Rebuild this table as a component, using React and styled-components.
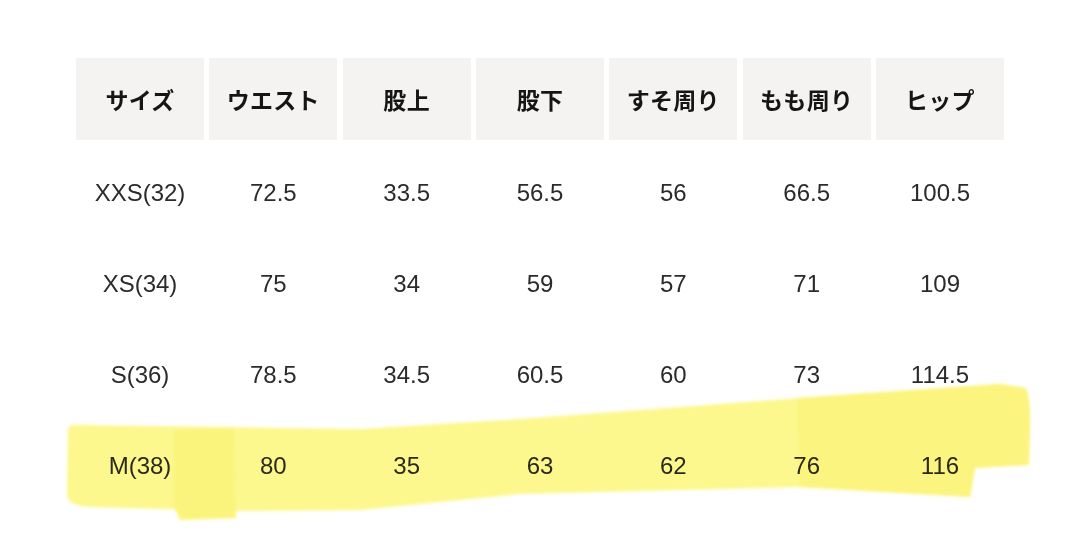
import React from 'react';
import styled, { createGlobalStyle } from 'styled-components';

const Global = createGlobalStyle`
  html, body {
    margin: 0;
    padding: 0;
    background: #ffffff;
  }
  body {
    width: 1080px;
    height: 535px;
    overflow: hidden;
  }
`

const Page = styled.div`
  position: relative;
  width: 1080px;
  height: 535px;
  box-sizing: border-box;
  padding: 58px 76px 0 76px;
`

const Table = styled.div`
  display: grid;
  grid-template-columns: repeat(7, 128px);
  column-gap: 5.33px;
  grid-template-rows: 85px repeat(4, 91px);
`

const HeadCell = styled.div`
  display: flex;
  align-items: center;
  justify-content: center;
  background: #f4f3f2;
  margin-bottom: 3px;
  font-family: "Noto Sans CJK JP", "Noto Sans", sans-serif;
  font-weight: 700;
  font-size: 23px;
  color: #151515;
  letter-spacing: 0.3px;
`

const Cell = styled.div`
  display: flex;
  align-items: center;
  justify-content: center;
  box-sizing: border-box;
  padding-top: 8px;
  font-family: "Liberation Sans", Arial, sans-serif;
  font-size: 24px;
  color: #2b2b2b;
`

const Highlight = styled.svg`
  position: absolute;
  left: 0;
  top: 0;
  width: 1080px;
  height: 535px;
  pointer-events: none;
  mix-blend-mode: multiply;
`

const headers = ['サイズ', 'ウエスト', '股上', '股下', 'すそ周り', 'もも周り', 'ヒップ']

const rows = [
  ['XXS(32)', '72.5', '33.5', '56.5', '56', '66.5', '100.5'],
  ['XS(34)', '75', '34', '59', '57', '71', '109'],
  ['S(36)', '78.5', '34.5', '60.5', '60', '73', '114.5'],
  ['M(38)', '80', '35', '63', '62', '76', '116'],
]

export default function App() {
  return (
    <Page>
      <Global />
      <Table>
        {headers.map(h => (
          <HeadCell key={h}>{h}</HeadCell>
        ))}
        {rows.map((row, i) =>
          row.map((v, j) => (
            <Cell key={`${i}-${j}`}>{v}</Cell>
          ))
        )}
      </Table>
      {/* highlighter marks over the M(38) row */}
      <Highlight viewBox="0 0 1080 535">
        <defs>
          <filter id="soft" x="-5%" y="-20%" width="110%" height="140%">
            <feGaussianBlur stdDeviation="1.8" />
          </filter>
        </defs>
        <g filter="url(#soft)">
          <path
            d="M68 428 Q70 424 80 425 L360 429 L520 419 L800 398 L1000 384 L1026 388 Q1031 400 1030 430 L1029 465 L975 468 L970 497 L800 487 L520 494 L360 510 L240 511 L90 507 Q68 506 67 495 Z"
            fill="#fcf88e"
          />
          <path d="M174 430 L234 428 L236 518 L180 520 L173 505 Z" fill="#fbf47c" />
          <path
            d="M797 398 L1000 384 L1026 388 Q1031 400 1030 430 L1029 465 L975 468 L970 497 L800 487 Z"
            fill="#fbf47e"
          />
        </g>
      </Highlight>
    </Page>
  );
}
